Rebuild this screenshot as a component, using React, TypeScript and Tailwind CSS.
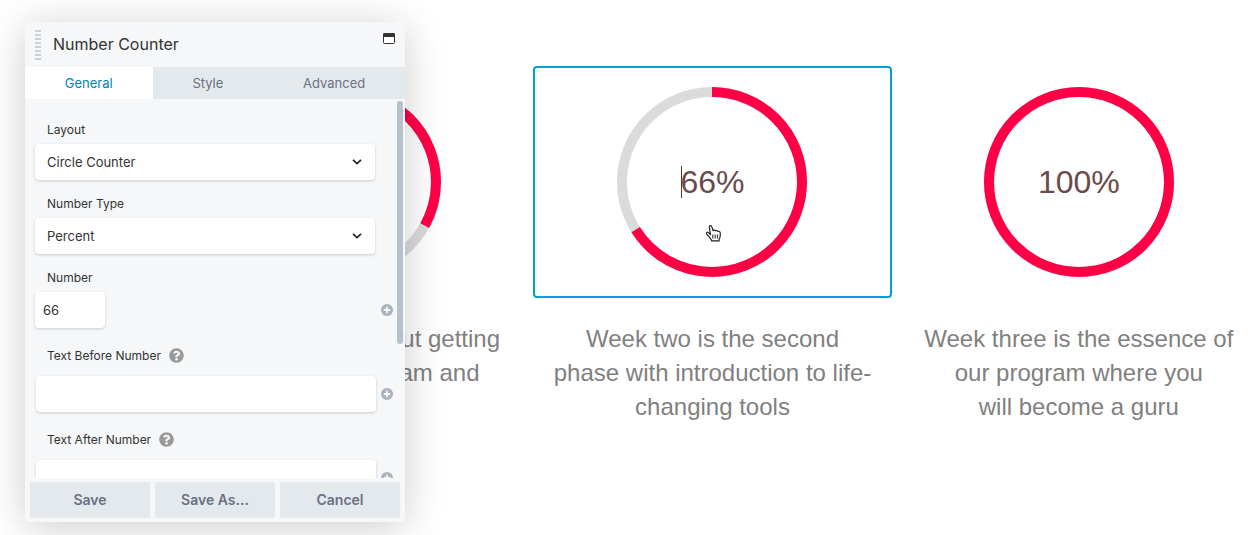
import React, { useId } from "react";

const UI_FONT = "font-['Inter','Liberation_Sans',sans-serif]";

function Ring({ percent }: { percent: number }) {
  const length = 2 * Math.PI * 90;
  return (
    <svg viewBox="0 0 190 190" className="size-full" aria-hidden="true">
      <circle cx="95" cy="95" r="90" fill="none" stroke="#dbdbdb" strokeWidth="10" />
      <circle
        cx="95"
        cy="95"
        r="90"
        fill="none"
        stroke="#ff0047"
        strokeWidth="10"
        strokeDasharray={`${(length * percent) / 100} ${length}`}
        transform="rotate(-90 95 95)"
      />
    </svg>
  );
}

function HandCursor() {
  return (
    <svg
      viewBox="0 0 18 19"
      className="absolute left-[88px] top-[137px] h-[19px] w-[18px]"
      aria-hidden="true"
    >
      <path
        d="M5.6 11.2 4.3 3.300C4 1.400 6.300.9 6.800 2.700l1.300 4c.4-1 2.100-1 2.400.2.7-.8 2.100-.5 2.300.6.9-.6 2.400 0 2.400 1.200v3.400c0 1.600-.9 2.300-1.100 3.400v1.400H6.700c-.2-1.700-1.600-2.700-2.800-4.200L1.500 9.800c-.7-1.200.8-2.100 1.900-1.200l2.100 1.900"
        fill="#fff"
        stroke="#222"
        strokeWidth="1.2"
        strokeLinejoin="round"
      />
      <path d="M7.800 10.500v4M10.100 10.500v4M12.400 10.500v4" stroke="#222" strokeWidth="1" />
    </svg>
  );
}

type CounterProps = {
  percent: number;
  lines: string[];
  active?: boolean;
};

function Counter({ percent, lines, active }: CounterProps) {
  return (
    <article className="min-w-0 flex-1">
      <div
        className={`flex justify-center rounded border-2 px-4 py-[19px] ${
          active ? "border-[#00a0d2]" : "border-transparent"
        }`}
      >
        <div className="relative size-[190px]">
          <Ring percent={percent} />
          <div className="absolute inset-0 flex items-center justify-center text-[32px] leading-8 text-[#6b4a4a]">
            <span className="relative">
              {active && <span className="absolute inset-y-0 left-px w-px bg-[#4d3838]" />}
              {percent}%
            </span>
          </div>
          {active && <HandCursor />}
        </div>
      </div>
      <p className="mt-6 text-center text-2xl leading-[34px] text-[#808080]">
        {lines.map((line) => (
          <span key={line} className="block whitespace-nowrap">
            {line}
          </span>
        ))}
      </p>
    </article>
  );
}

function PlusButton({ label }: { label: string }) {
  return (
    <button type="button" aria-label={label} className="ml-auto size-3 shrink-0">
      <svg viewBox="0 0 12 12" className="size-3" aria-hidden="true">
        <circle cx="6" cy="6" r="6" fill="#a9b2bd" />
        <path d="M6 2.800v6.400M2.800 6h6.400" stroke="#f5f7f9" strokeWidth="1.800" />
      </svg>
    </button>
  );
}

function HelpIcon() {
  return (
    <svg viewBox="0 0 512 512" className="size-[15px]" aria-hidden="true">
      <path
        fill="#999"
        d="M504 256c0 137-111 248-248 248S8 393 8 256 119 8 256 8s248 111 248 248zM262.700 90c-54.500 0-89.300 23-116.500 63.800-3.500 5.300-2.400 12.400 2.700 16.300l34.700 26.300c5.200 3.900 12.600 3 16.700-2.100 17.900-22.700 30.100-35.800 57.300-35.800 20.400 0 45.700 13.100 45.700 33 0 15-12.400 22.700-32.500 34C247.100 238.500 216 254.900 216 296v4c0 6.600 5.400 12 12 12h56c6.600 0 12-5.400 12-12v-1.300c0-28.500 83.200-29.600 83.200-106.700 0-58-60.200-102-116.500-102zM256 338c-25.400 0-46 20.600-46 46s20.600 46 46 46 46-20.600 46-46-20.600-46-46-46z"
      />
    </svg>
  );
}

function SelectField({ label, value }: { label: string; value: string }) {
  const id = useId();
  return (
    <div className="flex flex-col gap-[5px]">
      <label htmlFor={id} className="pl-3 text-xs leading-[18px]">
        {label}
      </label>
      <div className="relative mr-[18px]">
        <select
          id={id}
          className="block h-9 w-full appearance-none rounded bg-white px-3 pt-0.5 text-[13px] shadow-[0_1px_3px_rgba(0,0,0,0.18)]"
        >
          <option>{value}</option>
        </select>
        <svg
          viewBox="0 0 10 6"
          className="pointer-events-none absolute top-[15px] right-[13px] h-1.5 w-2.5"
          aria-hidden="true"
        >
          <path d="M1 .8 5 4.600 9 .8" fill="none" stroke="#222" strokeWidth="1.700" />
        </svg>
      </div>
    </div>
  );
}

function TextField({ label }: { label: string }) {
  const id = useId();
  return (
    <div className="flex flex-col gap-2">
      <div className="flex h-[25px] items-center gap-2 pl-3">
        <label htmlFor={id} className="text-xs">
          {label}
        </label>
        <HelpIcon />
      </div>
      <div className="flex items-center gap-[5px] pl-px">
        <input
          id={id}
          type="text"
          className="h-9 min-w-0 flex-1 rounded bg-white px-2 text-[13px] shadow-[0_1px_3px_rgba(0,0,0,0.18)]"
        />
        <PlusButton label={`Connect ${label}`} />
      </div>
    </div>
  );
}

function SettingsPanel() {
  return (
    <section
      aria-label="Number Counter"
      className={`absolute top-[22px] left-[25px] flex h-[500px] w-[380px] flex-col overflow-hidden rounded bg-[#f5f7f9] text-[#333] shadow-[0_5px_40px_rgba(0,0,0,0.2)] ${UI_FONT}`}
    >
      <header className="flex h-[45px] shrink-0 items-center px-2.5">
        <svg viewBox="0 0 6 30" className="h-[30px] w-1.5" aria-hidden="true">
          <path d="M3 0v30" stroke="#c8d1da" strokeWidth="6" strokeDasharray="2 2" />
        </svg>
        <h1 className="ml-3 pb-px text-base">Number Counter</h1>
        <button type="button" aria-label="Toggle window" className="mt-[11px] ml-auto self-start">
          <svg viewBox="0 0 12 11" className="h-[11px] w-3" aria-hidden="true">
            <rect x=".5" y=".5" width="11" height="10" rx="1" fill="#fff" stroke="#333" />
            <path d="M0 1.500Q0 0 1.500 0h9Q12 0 12 1.500V4H0z" fill="#333" />
          </svg>
        </button>
      </header>
      <nav className="flex h-8 shrink-0 bg-[#e4e9ee] text-[13px] text-[#6b7083]">
        <button type="button" className="flex-auto bg-white pt-0.5 text-[#0085ba]">
          General
        </button>
        <button type="button" className="flex-auto pt-0.5">
          Style
        </button>
        <button type="button" className="flex-auto pt-0.5">
          Advanced
        </button>
      </nav>
      <div className="relative min-h-0 flex-1 overflow-hidden">
        <form className="flex flex-col gap-[15px] pt-[22px] pr-3 pl-2.5">
          <SelectField label="Layout" value="Circle Counter" />
          <SelectField label="Number Type" value="Percent" />
          <div className="flex flex-col gap-[5px]">
            <label htmlFor="number" className="pl-3 text-xs leading-[18px]">
              Number
            </label>
            <div className="flex items-center">
              <input
                id="number"
                type="text"
                defaultValue="66"
                className="h-9 w-[70px] rounded bg-white px-2 text-[13px] shadow-[0_1px_3px_rgba(0,0,0,0.18)]"
              />
              <PlusButton label="Connect Number" />
            </div>
          </div>
          <TextField label="Text Before Number" />
          <TextField label="Text After Number" />
        </form>
        <div className="absolute top-0.5 right-0.5 h-[243px] w-1.5 rounded-full bg-[#b8c0cc]" />
      </div>
      <footer className="grid shrink-0 grid-cols-3 gap-[5px] px-[5px] py-1 text-sm font-semibold text-[#6b7083]">
        <button type="button" className="h-9 rounded-xs bg-[#e4e9ee]">
          Save
        </button>
        <button type="button" className="h-9 rounded-xs bg-[#e4e9ee]">
          Save As...
        </button>
        <button type="button" className="h-9 rounded-xs bg-[#e4e9ee]">
          Cancel
        </button>
      </footer>
    </section>
  );
}

export default function App() {
  return (
    <div className="relative min-h-screen overflow-hidden bg-white font-['Liberation_Sans',sans-serif]">
      <main className="-mr-1 flex gap-2 pt-[66px] pl-[167px]">
        <Counter
          percent={33}
          lines={["Week one is all about getting", "to know our program and", "meeting"]}
        />
        <Counter
          percent={66}
          active
          lines={["Week two is the second", "phase with introduction to life-", "changing tools"]}
        />
        <Counter
          percent={100}
          lines={["Week three is the essence of", "our program where you", "will become a guru"]}
        />
      </main>
      <SettingsPanel />
    </div>
  );
}
